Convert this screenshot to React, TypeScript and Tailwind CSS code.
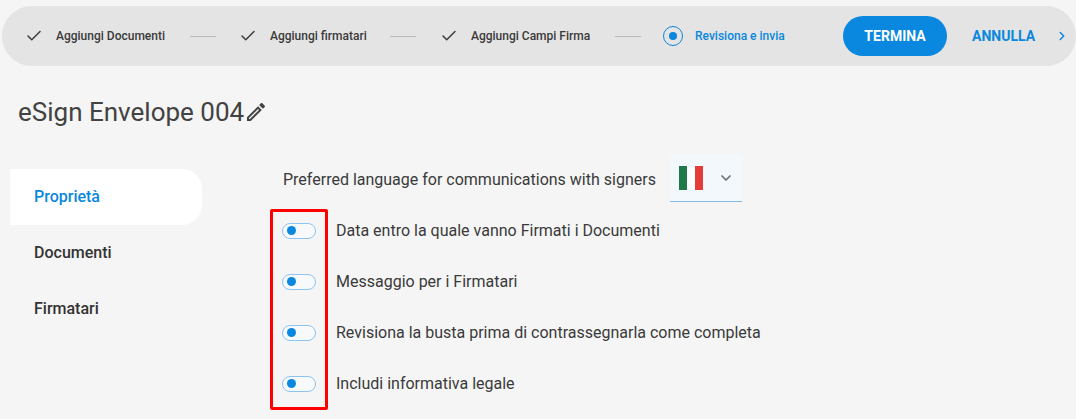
import { Check, ChevronDown, ChevronRight } from "lucide-react";
import { MdOutlineEdit } from "react-icons/md";

const font = { fontFamily: "Roboto, sans-serif" };

function Done({ label, w }: { label: string; w: string }) {
  return (
    <div className={`flex items-center ${w}`}>
      <Check size={18} strokeWidth={2} className="text-[#3c3c3c] shrink-0" />
      <span className="ml-[13px] text-[12px] font-medium text-[#3a3a3a] whitespace-nowrap">{label}</span>
    </div>
  );
}

function Line() {
  return <div className="h-px w-[26px] bg-[#b9b9b9] shrink-0" />;
}

function Toggle() {
  return (
    <div className="w-[34px] h-[16px] -ml-px rounded-full border border-[#8cc5f2] bg-[#f7f9fb] flex items-center pl-[4px] shrink-0">
      <div className="w-[9px] h-[9px] rounded-full bg-[#0a87de]" />
    </div>
  );
}

const rows = [
  "Data entro la quale vanno Firmati i Documenti",
  "Messaggio per i Firmatari",
  "Revisiona la busta prima di contrassegnarla come completa",
  "Includi informativa legale",
];

export default function App() {
  return (
    <div style={font} className="w-[1076px] h-[419px] overflow-hidden bg-[#f5f5f5] pt-[6px] pl-[2px]">
      <div className="w-[1074px] h-[60px] rounded-[30px] bg-[#e4e4e4] flex items-center pl-[23px]">
        <Done label="Aggiungi Documenti" w="w-[165px]" />
        <Line />
        <div className="w-[23px]" />
        <Done label="Aggiungi firmatari" w="w-[151px]" />
        <Line />
        <div className="w-[24px]" />
        <Done label="Aggiungi Campi Firma" w="w-[175px]" />
        <Line />
        <div className="w-[22px]" />
        <div className="w-[20px] h-[20px] rounded-full border border-[#0a87de] flex items-center justify-center shrink-0">
          <div className="w-[8px] h-[8px] rounded-full bg-[#0a87de]" />
        </div>
        <span className="ml-[12px] w-[148px] text-[12px] font-medium text-[#0a87de] whitespace-nowrap">Revisiona e invia</span>
        <button className="w-[104px] h-[40px] rounded-[20px] bg-[#0a87de] text-white text-[14px] font-bold">TERMINA</button>
        <span className="ml-[25px] text-[14px] font-bold text-[#0a87de]">ANNULLA</span>
        <ChevronRight size={14} strokeWidth={2.5} className="ml-[20px] text-[#0a87de]" />
      </div>

      <div className="mt-[28px] ml-[16px] flex items-center h-[36px] text-[26px] text-[#424242]">
        <span>eSign Envelope 004</span>
        <MdOutlineEdit size={24} className="text-[#424242]" />
      </div>

      <div className="flex mt-[39px] ml-[8px]">
        <nav className="w-[192px] text-[16px] font-medium text-[#333333] shrink-0">
          <div className="h-[56px] flex items-center pl-[24px] bg-white rounded-r-[20px] text-[#0a87de]">Proprietà</div>
          <div className="h-[56px] flex items-center pl-[24px]">Documenti</div>
          <div className="h-[56px] flex items-center pl-[24px]">Firmatari</div>
        </nav>
        <div className="ml-[81px] text-[#3a3a3a] text-[16px]">
          <div className="flex items-center h-[48px] -mt-[15px]">
            <span className="mt-[4px] w-[372px] whitespace-nowrap">Preferred language for communications with signers</span>
            <div className="ml-[15px] w-[72px] h-[48px] bg-[#f3f8fc] border-b border-[#86b8e0] rounded-t-[4px] flex items-center pl-[9px]">
              <svg width="24" height="24" viewBox="0 0 24 24" className="shrink-0">
                <rect width="8" height="24" fill="#1e7a4a" />
                <rect x="8" width="8" height="24" fill="#ffffff" />
                <rect x="16" width="8" height="24" fill="#e53c39" />
              </svg>
              <ChevronDown size={16} strokeWidth={2.6} className="ml-[15px] text-[#707070]" />
            </div>
          </div>
          <div className="relative mt-[3px]">
            <div className="absolute left-[-13px] top-[4px] w-[58px] h-[201px] border-[3px] border-[#ff0000] rounded-[2px]" />
            <div className="flex flex-col">
              {rows.map((r) => (
                <div key={r} className="h-[51px] flex items-center">
                  <Toggle />
                  <span className="ml-[20px] mt-px whitespace-nowrap">{r}</span>
                </div>
              ))}
            </div>
          </div>
        </div>
      </div>
    </div>
  );
}
